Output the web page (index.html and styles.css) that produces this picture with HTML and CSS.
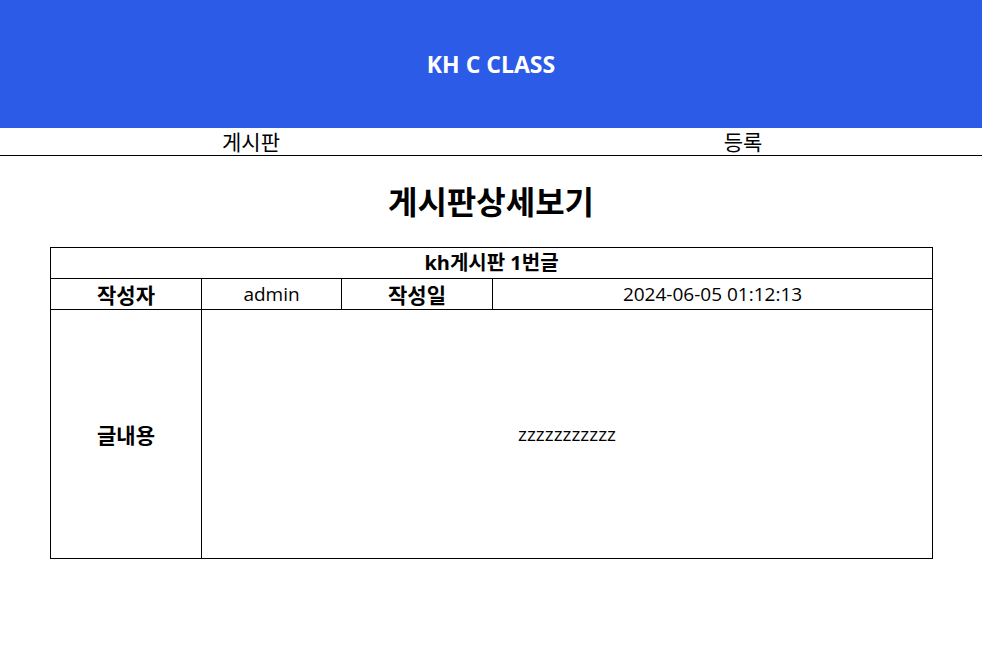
FILE: index.html
```html
<!DOCTYPE html>
<html lang="ko">
<head>
<meta charset="utf-8">
<title>게시판상세보기</title>
<link rel="stylesheet" href="styles.css">
</head>
<body>
<div class="page">
  <header class="top">
    <h2 class="brand">KH C CLASS</h2>
  </header>
  <nav class="menu">
    <a class="menu-item" href="#">게시판</a>
    <a class="menu-item" href="#">등록</a>
  </nav>
  <main class="content">
    <h1 class="title">게시판상세보기</h1>
    <table class="detail">
      <tr class="row-head">
        <th colspan="4">kh게시판 1번글</th>
      </tr>
      <tr class="row-meta">
        <th class="c1">작성자</th>
        <td class="c2">admin</td>
        <th class="c3">작성일</th>
        <td class="c4">2024-06-05 01:12:13</td>
      </tr>
      <tr class="row-body">
        <th>글내용</th>
        <td colspan="3">zzzzzzzzzzz</td>
      </tr>
    </table>
  </main>
</div>
</body>
</html>
```
FILE: styles.css
```css
html, body {
  margin: 0;
  padding: 0;
  background: #fff;
}
body {
  font-family: "Noto Sans", "Noto Sans CJK KR", sans-serif;
  color: #000;
}
.page {
  width: 982px;
}
.top {
  height: 128px;
  background: #2c5ce7;
  display: flex;
  align-items: center;
  justify-content: center;
}
.brand {
  margin: 0;
  color: #fff;
  font-size: 23px;
  font-weight: 700;
  font-family: "Open Sans", "Noto Sans CJK KR", sans-serif;
}
.menu {
  display: grid;
  grid-template-columns: 492px 492px;
  padding-left: 5px;
  height: 27px;
  border-bottom: 1px solid #000;
}
.menu-item {
  text-align: center;
  color: #000;
  text-decoration: none;
  font-size: 21px;
  line-height: 27px;
  font-family: "Noto Sans CJK KR", sans-serif;
}
.content {
  padding: 0 50px;
}
.title {
  margin: 24px 0 27px;
  text-align: center;
  font-size: 32px;
  line-height: 40px;
  font-weight: 700;
  font-family: "Noto Sans CJK KR", sans-serif;
}
.detail {
  width: 883px;
  border-collapse: collapse;
}
.detail th, .detail td {
  border: 1px solid #000;
  text-align: center;
  padding: 0;
  height: 30px;
  line-height: 26px;
}
.detail th {
  font-size: 21px;
  font-weight: 700;
  font-family: "Noto Sans CJK KR", sans-serif;
}
.detail td {
  font-size: 19px;
  font-weight: 400;
  font-family: "Open Sans", "Noto Sans CJK KR", sans-serif;
}
.row-head th {
  font-size: 20px;
  font-family: "Open Sans", "Noto Sans CJK KR", sans-serif;
}
.c1 { width: 150px; }
.c2 { width: 139px; }
.c3 { width: 150px; }
.row-body th, .row-body td {
  height: 248px;
}
```
